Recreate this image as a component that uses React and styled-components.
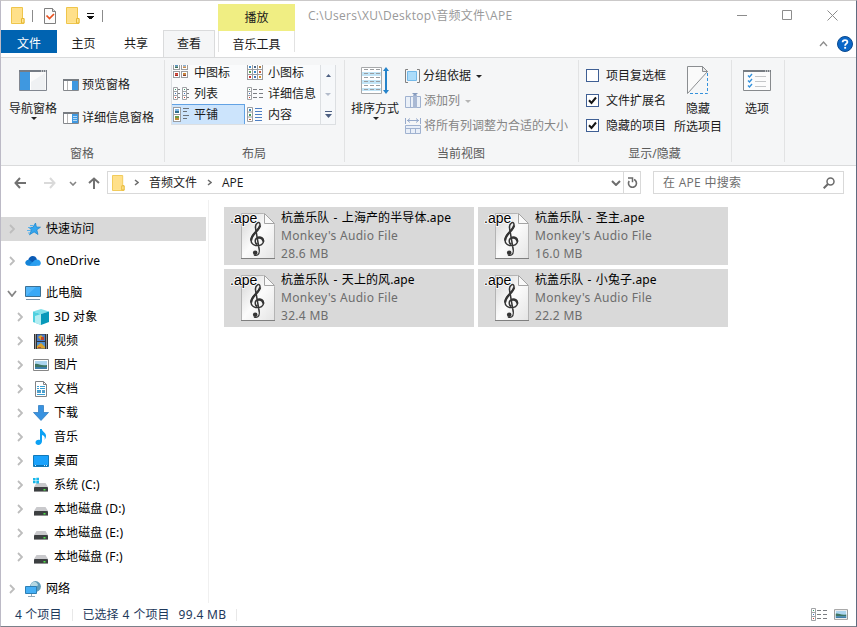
import React from 'react'
import styled, { createGlobalStyle, css } from 'styled-components'

const GlobalStyle = createGlobalStyle`
  * {
    box-sizing: border-box;
  }
  body {
    margin: 0;
    font-family: 'Noto Sans', 'Noto Sans CJK SC', sans-serif;
    font-size: 12px;
    color: #1b1b1b;
  }
  svg {
    display: block;
    flex: none;
  }
`

const Window = styled.div`
  display: flex;
  flex-direction: column;
  width: 857px;
  height: 627px;
  overflow: hidden;
  background: #fff;
  border: 1px solid;
  border-color: #cbc9c9 #5f6b80 #7b808a #bcbac6;
`

const Text = styled.span`
  white-space: nowrap;
  line-height: ${(p) => p.$line || 18}px;
  letter-spacing: ${(p) => p.$track || 0}px;
  word-spacing: ${(p) => p.$word || 0}px;
  color: ${(p) => p.$color || 'inherit'};
`

/* ---------- title bar and tabs ---------- */

const Header = styled.header`
  display: flex;
  height: 56px;
  flex: none;
  justify-content: space-between;
`
const HeaderLeft = styled.div`
  display: flex;
  flex-direction: column;
  width: 217px;
`
const QuickBar = styled.div`
  display: flex;
  align-items: center;
  height: 30px;
  padding-left: 10px;
`
const QuickItem = styled.div`
  margin-left: ${(p) => p.$gap || 0}px;
`
const BarLine = styled.div`
  width: 1px;
  height: 12px;
  margin-left: ${(p) => p.$gap}px;
  background: #8b8b8b;
`
const Tabs = styled.nav`
  display: flex;
  height: 27px;
`
const Tab = styled.div`
  display: flex;
  justify-content: center;
  width: ${(p) => p.$width}px;
  height: 26px;
  line-height: 28px;
  ${(p) =>
    p.$kind === 'file' &&
    css`
      height: 23px;
      background: #0063b1;
      color: #fff;
    `}
  ${(p) =>
    p.$kind === 'active' &&
    css`
      height: 27px;
      margin-left: 1px;
      background: #f5f6f7;
      border: 1px solid #dadbdc;
      border-bottom: 0;
      line-height: 26px;
      z-index: 1;
    `}
`
const ContextTab = styled.div`
  width: 77px;
  padding-top: 3px;
  text-align: center;
`
const ContextTitle = styled.div`
  height: 27px;
  line-height: 28px;
  background: #f0ee83;
`
const ContextName = styled.div`
  height: 21px;
  line-height: 28px;
  border: solid #e2e2e2;
  border-width: 0 1px;
`
const TitlePath = styled.div`
  flex: 1;
  height: 30px;
  padding-left: 13px;
  line-height: 30px;
  font-family: 'Open Sans', 'Noto Sans CJK SC', sans-serif;
  color: #999;
  letter-spacing: 0.3px;
`
const WindowControls = styled.div`
  display: flex;
  flex-direction: column;
  width: 126px;
`
const ControlRow = styled.div`
  display: flex;
  align-items: center;
  height: 28px;
  padding-left: 7px;
  gap: 35px;
`
const HelpRow = styled.div`
  display: flex;
  align-items: center;
  justify-content: flex-end;
  height: 28px;
  padding: 2px 3px 0 0;
  gap: 9px;
`

/* ---------- ribbon ---------- */

const Ribbon = styled.section`
  display: flex;
  flex: none;
  height: 109px;
  padding: 2px 0 3px;
  background: #f5f6f7;
  border-top: 1px solid #dadbdc;
  border-bottom: 1px solid #dadbdc;
`
const Group = styled.div`
  display: flex;
  flex-direction: column;
  width: ${(p) => p.$width}px;
  border-right: 1px solid #e2e3e4;
`
const GroupBody = styled.div`
  display: flex;
  flex: none;
  height: 84px;
  padding: ${(p) => p.$pad};
`
const GroupName = styled.div`
  flex: none;
  height: 18px;
  padding-right: 1px;
  line-height: 20px;
  text-align: center;
  color: #5a5a5a;
`
const BigButton = styled.div`
  display: flex;
  flex-direction: column;
  align-items: center;
  width: ${(p) => p.$width || 48}px;
`
const BigIcon = styled.div`
  display: flex;
  align-items: center;
  height: 40px;
`
const SmallStack = styled.div`
  display: flex;
  flex-direction: column;
  padding-top: ${(p) => p.$top || 0}px;
  margin-left: ${(p) => p.$left || 0}px;
  gap: ${(p) => p.$gap}px;
`
const SmallButton = styled.div`
  display: flex;
  align-items: center;
  height: 18px;
  gap: ${(p) => p.$gap || 3}px;
  color: ${(p) => (p.$disabled ? '#858585' : 'inherit')};
`
const Arrow = styled.i`
  width: 0;
  height: 0;
  margin: ${(p) => p.$margin || 0};
  border: solid transparent;
  border-width: 3px 3px 0;
  border-top-color: ${(p) => p.$color || '#222'};
`
const Gallery = styled.div`
  display: flex;
  width: 165px;
  height: 60px;
  overflow: hidden;
  background: #fafbfc;
  border: 1px solid #dcdfe2;
  border-top: 0;
`
const GalleryGrid = styled.div`
  display: grid;
  grid-template-columns: 74px 74px;
  grid-auto-rows: 21px;
  margin: -3px 0 0 -1px;
`
const GalleryItem = styled.div`
  display: flex;
  align-items: center;
  padding-left: 1px;
  gap: 5px;
  border: 1px solid ${(p) => (p.$active ? '#62a2e4' : 'transparent')};
  background: ${(p) => (p.$active ? '#cce4fc' : 'transparent')};
`
const GalleryScroll = styled.div`
  display: grid;
  grid-template-rows: 20px 19px 20px;
  width: 15px;
  margin-left: 1px;
  border-left: 1px solid #dcdfe2;
  background: #f6f8fa;
  place-items: center;
`
const Check = styled.div`
  display: flex;
  align-items: center;
  justify-content: center;
  width: 13px;
  height: 13px;
  margin-top: -1px;
  background: #fff;
  border: 1px solid #3f5f94;
`

/* ---------- address bar ---------- */

const AddressRow = styled.div`
  display: flex;
  flex: none;
  align-items: flex-start;
  height: 34px;
  padding-top: 5px;
`
const NavButtons = styled.div`
  display: flex;
  align-items: center;
  width: 106px;
  height: 24px;
  padding-left: 13px;
`
const AddressBox = styled.div`
  display: flex;
  align-items: center;
  width: 534px;
  height: 23px;
  padding-left: 4px;
  border: 1px solid #d9d9d9;
  font-family: 'Open Sans', 'Noto Sans CJK SC', sans-serif;
`
const Crumb = styled.span`
  margin: 0 ${(p) => p.$right || 0}px 0 10px;
  line-height: 20px;
`
const AddressEnd = styled.div`
  display: flex;
  align-items: center;
  margin-left: auto;
  height: 21px;
  gap: 2px;
`
const Refresh = styled.div`
  display: flex;
  align-items: center;
  justify-content: center;
  width: 17px;
  height: 21px;
  border-left: 1px solid #d9d9d9;
`
const SearchBox = styled.div`
  display: flex;
  align-items: center;
  justify-content: space-between;
  width: 191px;
  height: 23px;
  margin-left: 12px;
  padding: 0 8px 0 9px;
  border: 1px solid #d9d9d9;
  font-family: 'Open Sans', 'Noto Sans CJK SC', sans-serif;
  color: #6d6d6d;
`

/* ---------- main area ---------- */

const Main = styled.main`
  display: flex;
  flex: none;
  height: 403px;
`
const Sidebar = styled.aside`
  display: flex;
  flex-direction: column;
  width: 208px;
  padding: 17px 2px 0 0;
  border-right: 1px solid #f0f0f0;
  color: #000;
`
const TreeRow = styled.div`
  display: flex;
  flex: none;
  align-items: center;
  height: 24px;
  padding-left: ${(p) => (p.$child ? 15 : 7)}px;
  margin-bottom: ${(p) => p.$space || 0}px;
  background: ${(p) => (p.$selected ? '#d9d9d9' : 'transparent')};
`
const Expander = styled.div`
  display: flex;
  justify-content: center;
  width: 8px;
`
const TreeIcon = styled.div`
  width: 16px;
  margin: 0 5px 0 9px;
`
const Files = styled.div`
  display: grid;
  align-content: start;
  grid-template-columns: 250px 250px;
  grid-auto-rows: 58px;
  gap: 4px;
  padding: 7px 0 0 15px;
`
const Tile = styled.div`
  display: flex;
  padding: 2px 0 0 6px;
  background: #d9d9d9;
`
const TileText = styled.div`
  display: flex;
  flex-direction: column;
  margin-left: 5px;
`
const StatusBar = styled.footer`
  display: flex;
  align-items: center;
  height: 22px;
  padding: 2px 8px 0 14px;
  color: #1e395b;
`
const StatusLine = styled.div`
  width: 1px;
  height: 12px;
  margin: 0 ${(p) => p.$right}px 0 ${(p) => p.$left}px;
  background: #e8e8e8;
`
const StatusViews = styled.div`
  display: flex;
  align-items: center;
  height: 18px;
  margin: -2px 0 0 auto;
  gap: 7px;
`

/* ---------- icons ---------- */

const Folder = ({ w = 14, h = 17 }) => (
  <svg width={w} height={h} viewBox='0 0 14 17'>
    <path d='M.5.5h11v11h1.500v5H.5z' fill='#ffe696' stroke='#efc54b' />
    <path d='M1 1h10v14H1z' fill='#ffe08a' />
    <path d='M10.500 11.500h2.500v4.500h-2.500z' fill='#ffe696' stroke='#e6b835' />
  </svg>
)

const PropertiesIcon = () => (
  <svg width='12' height='16' viewBox='0 0 12 16'>
    <path d='M.5.5h8l3 3v12H.5z' fill='#fcfcfc' stroke='#7f7f7f' />
    <path d='M8.500.5v3h3' fill='#ddd' stroke='#7f7f7f' />
    <path d='M2.500 7.500l3 3L10 6' fill='none' stroke='#e8501e' strokeWidth='1.700' />
  </svg>
)

const CustomizeIcon = () => (
  <svg width='7' height='6' viewBox='0 0 7 6' shapeRendering='crispEdges'>
    <path d='M0 0h7v1H0zM0 3h7v1H6v1H5v1H2V5H1V4H0z' fill='#111' />
  </svg>
)

const MinimizeIcon = () => (
  <svg width='10' height='10' viewBox='0 0 10 10'>
    <path d='M0 5.500h10' stroke='#8c8c8c' />
  </svg>
)
const MaximizeIcon = () => (
  <svg width='10' height='10' viewBox='0 0 10 10'>
    <path d='M.5.5h9v9h-9z' fill='none' stroke='#8c8c8c' />
  </svg>
)
const CloseIcon = () => (
  <svg width='11' height='11' viewBox='0 0 11 11'>
    <path d='M.5.5l10 10M10.500.5l-10 10' stroke='#8c8c8c' />
  </svg>
)
const HelpIcon = () => (
  <svg width='16' height='16' viewBox='0 0 16 16'>
    <circle cx='8' cy='8' r='7.500' fill='#0a67c8' stroke='#0b4a8f' />
    <path
      d='M5.600 6.200C5.700 3.400 10.400 3.400 10.400 6c0 1.600-2.300 1.800-2.300 3.700'
      fill='none'
      stroke='#fff'
      strokeWidth='1.800'
    />
    <path d='M7.200 10.900h1.900v1.800H7.200z' fill='#fff' />
  </svg>
)

const Chevron = ({ dir = 'right', color = '#a6a6a6', w = 6, h = 10, bold = 1.3 }) => {
  const paths = {
    right: `M1 1l${w - 2} ${h / 2 - 1}l${2 - w} ${h / 2 - 1}`,
    down: `M1 1l${w / 2 - 1} ${h - 2}l${w / 2 - 1} ${2 - h}`,
    up: `M1 ${h - 1}l${w / 2 - 1} ${2 - h}l${w / 2 - 1} ${h - 2}`
  }
  return (
    <svg width={w} height={h}>
      <path d={paths[dir]} fill='none' stroke={color} strokeWidth={bold} />
    </svg>
  )
}

const NavPaneIcon = () => (
  <svg width='28' height='21' viewBox='0 0 28 21'>
    <path d='M.5.5h27v20H.5z' fill='#fafafa' stroke='#828790' />
    <path d='M0 0h28v2H0z' fill='#767c85' />
    <path d='M22 .5h1v1h-1zM24 .5h1v1h-1zM26 .5h1v1h-1z' fill='#fff' />
    <path d='M1 2h10v18H1z' fill='#3f98e0' />
    <path d='M11 2h1v18h-1z' fill='#fff' />
    <path d='M12 20V12L26 3v17z' fill='#eff1f3' />
  </svg>
)

const PaneIcon = ({ details }) => (
  <svg width='16' height='12' viewBox='0 0 16 12'>
    <path d='M.5.5h15v11H.5z' fill='#fff' stroke='#85888c' />
    <path d='M0 0h16v2H0z' fill='#777c82' />
    <path d='M4.500 2v9' stroke='#b8b8b8' />
    <path d='M9 2h6v9H9z' fill='#3f98e0' />
    {details && (
      <path d='M10 4.500h4M10 6.500h4M10 8.500h4' stroke='#d4eafa' strokeWidth='.8' />
    )}
  </svg>
)

// framed thumbnail: sky on top, a coloured subject below
const Thumb = ({ x, y, s = 6, fill = '#5b95c4', ground = '#3d6f5a' }) => (
  <g>
    <rect x={x + 0.5} y={y + 0.5} width={s} height={s} fill='#fff' stroke='#9b9da0' />
    <rect x={x + 2} y={y + 2} width={s - 3} height={(s - 3) / 2} fill={fill} />
    <rect x={x + 2} y={y + 2 + (s - 3) / 2} width={s - 3} height={(s - 3) / 2} fill={ground} />
  </g>
)

const MediumIcon = () => (
  <svg width='16' height='19' viewBox='0 0 16 19'>
    <Thumb x={0} y={0} />
    <Thumb x={8} y={0} fill='#8db4d8' ground='#c98b4c' />
    <Thumb x={0} y={8} fill='#cc3a2b' ground='#a92218' />
    <Thumb x={8} y={8} fill='#d28a2b' ground='#8d3f22' />
  </svg>
)

const SmallIcon = () => {
  const colors = ['#3d88c9', '#48688c', '#b1793d', '#5aa050', '#3d88c9', '#c45c3e', '#c33', '#4575b5', '#d6902c']
  return (
    <svg width='16' height='18' viewBox='0 0 16 18'>
      {colors.map((c, i) => (
        <g key={i}>
          <rect
            x={(i % 3) * 5 + 0.5}
            y={Math.floor(i / 3) * 5 + 0.5}
            width='5'
            height='5'
            fill='#fff'
            stroke='#9b9da0'
          />
          <rect x={(i % 3) * 5 + 2} y={Math.floor(i / 3) * 5 + 2} width='2' height='2' fill={c} />
        </g>
      ))}
    </svg>
  )
}

const DetailColumn = ({ x, lines }) => (
  <g transform={`translate(${x} 0)`}>
    <path d='M.5.5h4v12h-4zM.5 4.500h4M.5 8.500h4' fill='#fff' stroke='#a1a3a6' />
    <path d='M2 2h1v1H2z' fill='#3b9a6a' />
    <path d='M2 6h1v1H2z' fill='#3d72c2' />
    <path d='M2 10h1v1H2z' fill='#cc3c2f' />
    <path d={lines} stroke='#7a7d82' />
  </g>
)
const ListIcon = () => (
  <svg width='16' height='13' viewBox='0 0 16 13'>
    <DetailColumn x={0} lines='M5 2.500h2M5 6.500h2M5 10.500h2' />
    <DetailColumn x={9} lines='M5 2.500h2M5 6.500h2M5 10.500h2' />
  </svg>
)
const DetailsIcon = () => (
  <svg width='16' height='13' viewBox='0 0 16 13'>
    <DetailColumn x={0} lines='M6 2.500h4M12 2.500h4M6 6.500h4M12 6.500h4M6 10.500h4M12 10.500h4' />
  </svg>
)
const TilesIcon = () => (
  <svg width='16' height='15' viewBox='0 0 16 15'>
    <Thumb x={0} y={0} s={7} fill='#7fb8e6' ground='#2f6f8c' />
    <Thumb x={0} y={7} s={7} fill='#6d9a45' ground='#c08a35' />
    <path d='M10 1.500h6M10 4.500h4M10 8.500h6M10 11.500h4' stroke='#6c7279' />
  </svg>
)
const ContentIcon = () => (
  <svg width='16' height='15' viewBox='0 0 16 15'>
    <path d='M.5.5h5v14h-5zM.5 5h5M.5 10h5' fill='#fff' stroke='#9b9da0' />
    <path d='M2 2h2v2H2z' fill='#3a86b5' />
    <path d='M2 7h2v2H2z' fill='#44975a' />
    <path d='M2 12h2v1H2z' fill='#b5562c' />
    <path d='M8 1.500h7M8 4.500h7M8 7.500h7M8 10.500h7M8 13.500h7' stroke='#4e7fc4' />
  </svg>
)

const SortIcon = () => (
  <svg width='28' height='27' viewBox='0 0 28 27'>
    <path d='M.5.5h20v26H.5z' fill='#fff' stroke='#a7a9ab' />
    <path d='M1 5h19v4H1zM1 13h19v4H1zM1 21h19v3H1z' fill='#c2e5f7' />
    <path
      d='M3 2.500h16M3 6.500h16M3 10.500h16M3 14.500h16M3 18.500h16M3 22.500h16'
      stroke='#9a9da0'
      strokeDasharray='4 2'
    />
    <path d='M25 3v21' stroke='#2583ca' strokeWidth='2' />
    <path d='M22 4l3-4 3 4zM22 23l3 4 3-4z' fill='#2583ca' />
  </svg>
)
const GroupByIcon = () => (
  <svg width='15' height='14' viewBox='0 0 15 14'>
    <path d='M3 .5H.5v13H3M12 .5h2.500v13H12' fill='none' stroke='#818181' />
    <path d='M2.500 2.500h9v9h-9z' fill='#acdcfa' stroke='#74b9e8' />
  </svg>
)
const AddColumnIcon = () => (
  <svg width='16' height='16' viewBox='0 0 16 16'>
    <path d='M.5 3.500h15v11H.5zM5.500 3v11' fill='#eaf0f8' stroke='#a0b2d0' />
    <path d='M8 2h4v13H8z' fill='#a9b9d4' />
    <path d='M7 0h6l-3 3z' fill='#869bbe' />
  </svg>
)
const FitColumnsIcon = () => (
  <svg width='16' height='16' viewBox='0 0 16 16'>
    <path d='M.5 0v6M15.500 0v6M2 2.500h12M5 .5l-2.500 2L5 4.500M11 .5l2.500 2-2.500 2' fill='none' stroke='#97aacb' />
    <path d='M.5 7.500h15v8H.5zM.5 10.500h15M5.500 10.500v5M10.500 10.500v5' fill='#e9eff8' stroke='#a0b2d0' />
  </svg>
)
const CheckMark = () => (
  <svg width='9' height='9' viewBox='0 0 9 9'>
    <path d='M1 4.200l2.500 2.700L8 1.500' fill='none' stroke='#151515' strokeWidth='2' />
  </svg>
)
const HideIcon = () => (
  <svg width='22' height='28' viewBox='0 0 22 28'>
    <path d='M.5.5h15l5 5L.5 27.500z' fill='#fafafa' />
    <path d='M.5 27.500V.5h15l5 5L.5 27.500' fill='none' stroke='#8b8e91' />
    <path d='M15.500.5v5h5z' fill='#e8e8e8' stroke='#8b8e91' />
    <path d='M20.500 7v20.500H1' fill='none' stroke='#3391dc' strokeDasharray='3 2' />
  </svg>
)
const OptionsIcon = () => (
  <svg width='28' height='21' viewBox='0 0 28 21'>
    <path d='M.5.5h27v20H.5z' fill='#fcfcfc' stroke='#878a8d' />
    <path d='M0 0h28v2H0z' fill='#777c82' />
    <path d='M22 .5h1v1h-1zM24 .5h1v1h-1zM26 .5h1v1h-1z' fill='#fff' />
    <path
      d='M5 5.500l1.500 1.500L9 4M5 10.500L6.500 12 9 9M5 15.500L6.500 17 9 14'
      fill='none'
      stroke='#3391dc'
      strokeWidth='1.400'
    />
    <path d='M12 6.500h11M12 11.500h11M12 16.500h11' stroke='#c4c6c8' />
  </svg>
)

const MoveArrow = ({ d, color, w = 12, h = 12 }) => (
  <svg width={w} height={h} viewBox={`0 0 ${w} ${h}`}>
    <path d={d} fill='none' stroke={color} strokeWidth='2' />
  </svg>
)
const RefreshIcon = () => (
  <svg width='11' height='12' viewBox='0 0 11 12'>
    <path d='M7 2.600A4 4 0 1 1 2.200 4' fill='none' stroke='#6b6b6b' strokeWidth='1.600' />
    <path d='M1 1h4.500v4.300' fill='none' stroke='#6b6b6b' strokeWidth='1.500' />
  </svg>
)
const SearchIcon = () => (
  <svg width='12' height='12' viewBox='0 0 12 12'>
    <circle cx='7.500' cy='4.500' r='3.500' fill='none' stroke='#6b6b6b' strokeWidth='1.500' />
    <path d='M5 7L.7 11.300' stroke='#6b6b6b' strokeWidth='2' />
  </svg>
)

const StarIcon = () => (
  <svg width='16' height='16' viewBox='0 0 16 16'>
    <path
      d='M10.500 2l.9 4 4.100.2-3.700 2.600 1.200 4.700-3.900-2.600-4.600 2.900 2-4.900L4 6.500l4-.2z'
      fill='#35a6ee'
      stroke='#1582cc'
      strokeWidth='.7'
    />
    <path d='M5 4.500h3.500M3 6.500h3M2 9.500h4M3 12h2' stroke='#58b2ec' />
  </svg>
)
const CloudIcon = () => (
  <svg width='16' height='16' viewBox='0 0 16 16'>
    <path d='M3 8.200C3.800 2 10.500 1.500 12 6.500L8 11z' fill='#0a5ab5' />
    <path d='M4 12.800C-1.200 12.800-.8 6.400 4.200 6.700L12 12.800z' fill='#1484d8' />
    <path d='M4 12.800l5.500-5.500c3-2.100 6.800.3 6.300 3.200-.3 1.500-1.300 2.300-2.500 2.300z' fill='#2a9ff0' />
  </svg>
)
const ComputerIcon = () => (
  <svg width='16' height='16' viewBox='0 0 16 16'>
    <path d='M.5 1.500h15v10H.5z' fill='#54b7fa' stroke='#3c7195' />
    <path d='M1 11L11 2h4v9z' fill='#3aa9f6' />
    <path d='M5 12h6v1H5z' fill='#fff' />
    <path d='M1 14.500h14' stroke='#7893aa' />
  </svg>
)
const CubeIcon = () => (
  <svg width='16' height='16' viewBox='0 0 16 16'>
    <path d='M0 2.500L8 0l8 2.500L8 5z' fill='#7fe0ea' />
    <path d='M0 2.500L8 5v11l-8-3z' fill='#4fd0df' />
    <path d='M16 2.500L8 5v11l8-3z' fill='#0899ba' />
    <path d='M2 7l6-2v11l-6-2.300z' fill='#b4edf2' />
  </svg>
)
const VideoIcon = () => (
  <svg width='16' height='16' viewBox='0 0 16 16'>
    <path d='M1 1h14v15H1z' fill='#333' />
    <path d='M4 1.500h8V8H4z' fill='#4679c7' />
    <path d='M4 9h8v6.500H4z' fill='#4f90d2' />
    <path d='M5 4l3-2 3 3-3 2zM4 13l4-3 4 4v1.500H4z' fill='#dba42a' />
    <path d='M8 4h3v3H8zM5 14h3v1H5z' fill='#bd442d' />
    <path d='M2.500 1.500V16M13.500 1.500V16' stroke='#f1f1f1' strokeDasharray='1 1' />
  </svg>
)
const PictureIcon = ({ w = 16, h = 12 }) => (
  <svg width={w} height={h} viewBox='0 0 16 12'>
    <path d='M.5.5h15v11H.5z' fill='#fff' stroke='#878787' />
    <path d='M2 2h12v8H2z' fill='#acd5ef' />
    <path d='M2 5c3-1 5 2 12 1v2H2z' fill='#3e7562' />
    <path d='M2 8h12v2H2z' fill='#3f7fa9' />
  </svg>
)
const DocumentIcon = () => (
  <svg width='16' height='16' viewBox='0 0 16 16'>
    <path d='M2.500.5h8l3 3v12h-11z' fill='#fff' stroke='#808386' />
    <path d='M10.500.5v3h3' fill='none' stroke='#808386' />
    <path d='M4 5.500h2M7 5.500h5M4 7.500h2M7 7.500h5M4 9.500h4M9 11.500h3M4 13.500h8' stroke='#379fd5' />
    <path d='M4 10h4v2H4zM9 9h3v2H9z' fill='#5a9ec5' />
  </svg>
)
const DownloadIcon = () => (
  <svg width='16' height='16' viewBox='0 0 16 16'>
    <path d='M5.500.5h5v7h5L8 15.500.5 7.500h5z' fill='#3892e0' stroke='#2476bd' strokeWidth='.7' />
  </svg>
)
const MusicIcon = () => (
  <svg width='16' height='16' viewBox='0 0 16 16'>
    <path
      d='M7 0h1.800c.3 2.800 4.600 3.500 4.200 7.300-.1 1.500-.7 2.600-1.500 3.600.8-2.300.3-4.100-2.500-5v6.400C9 16.800 2.500 17 2.500 13.500c0-2.300 2.500-3.300 4.500-2.500z'
      fill='#0ca1f4'
    />
  </svg>
)
const DesktopIcon = () => (
  <svg width='16' height='12' viewBox='0 0 16 12'>
    <path d='M.5.5h15v11H.5z' fill='#1aa2fc' stroke='#1179b9' />
    <path d='M1 10.500h14' stroke='#0c71b1' />
    <path d='M2 10h1v1H2zM11 10h1v1h-1zM13 10h1v1h-1z' fill='#d1efff' />
  </svg>
)
const DriveIcon = ({ system }) => (
  <svg width='16' height='16' viewBox='0 0 16 16'>
    <path d='M3.500 6h9L15 10v4.500H1V10z' fill='#c9c9cc' />
    <path d='M1.500 10h13l.5.5v4H1v-4z' fill='#3c3f41' />
    <path d='M10.500 12h2v1.500h-2z' fill='#4ee847' />
    {system && <path d='M0 1h2.600v2.400H0zM3.300.7H6v2.700H3.300zM0 4h2.600v2.300H0zM3.300 4H6v2.600H3.300z' fill='#18b7ea' />}
  </svg>
)
const NetworkIcon = () => (
  <svg width='16' height='16' viewBox='0 0 16 16'>
    <circle cx='10.500' cy='5.500' r='5.400' fill='#5f9bb8' />
    <path d='M6 3c3-4 6-2 7 1-2 3-4 0-7 2z' fill='#b6d8e2' />
    <path d='M.5 5.500h11v7H.5z' fill='#45aff5' stroke='#2e7fb4' />
    <path d='M3 15.500h7M6.500 13v2' stroke='#91a8b7' />
  </svg>
)

const ApeIcon = () => (
  <svg width='46' height='54' viewBox='0 0 46 54'>
    <defs>
      <linearGradient id='paper' x1='0' y1='0' x2='1' y2='1'>
        <stop offset='0' stopColor='#d4d4d4' />
        <stop offset='.5' stopColor='#fbfbfb' />
        <stop offset='1' stopColor='#e4e4e4' />
      </linearGradient>
    </defs>
    <path d='M11.500 4.500h22l11 11v34h-33z' fill='url(#paper)' stroke='#b4b4b4' />
    <path d='M11 49.500h34' stroke='#7f7f7f' />
    <path d='M34.500 4.500v10h10z' fill='#f9f9f9' stroke='#a4a4a4' />
    <path
      d='M25.500 19L29.300 41M25.500 19C25 14 29.800 11.500 30 15.500C30.500 21.500 21 24.500 21 31C21 38.500 33.500 38 33.500 32.300C33.500 27 25.200 26.800 25.200 32C25.200 33.800 26 34.800 27.200 35.200'
      fill='none'
      stroke='#343434'
      strokeWidth='1.500'
    />
    <path
      d='M30 16.500C29.500 21.500 21 25 21.200 31.500M28 28.800C31.500 28.200 33.300 30.300 33.200 32.500'
      fill='none'
      stroke='#343434'
      strokeWidth='2.300'
    />
    <path d='M29.300 41c.5 4.800-2.800 6.400-5.300 4.900' fill='none' stroke='#343434' strokeWidth='1.200' />
    <circle cx='25.200' cy='43.800' r='2.300' fill='#343434' />
    <text
      x='0'
      y='14'
      fontFamily='Liberation Sans, sans-serif'
      fontSize='14'
      fill='#000'
      stroke='#fff'
      strokeWidth='1.500'
      paintOrder='stroke'
    >
      .ape
    </text>
  </svg>
)

/* ---------- data ---------- */

const VIEWS = [
  { name: '中图标', icon: <MediumIcon /> },
  { name: '小图标', icon: <SmallIcon /> },
  { name: '列表', icon: <ListIcon /> },
  { name: '详细信息', icon: <DetailsIcon /> },
  { name: '平铺', icon: <TilesIcon />, active: true },
  { name: '内容', icon: <ContentIcon /> }
]

const CHECKS = [
  { name: '项目复选框', checked: false },
  { name: '文件扩展名', checked: true },
  { name: '隐藏的项目', checked: true }
]

const TREE = [
  { name: '快速访问', icon: <StarIcon />, selected: true, space: 8 },
  { name: 'OneDrive', icon: <CloudIcon />, space: 8 },
  { name: '此电脑', icon: <ComputerIcon />, open: true },
  { name: '3D 对象', icon: <CubeIcon />, child: true },
  { name: '视频', icon: <VideoIcon />, child: true },
  { name: '图片', icon: <PictureIcon />, child: true },
  { name: '文档', icon: <DocumentIcon />, child: true },
  { name: '下载', icon: <DownloadIcon />, child: true },
  { name: '音乐', icon: <MusicIcon />, child: true },
  { name: '桌面', icon: <DesktopIcon />, child: true },
  { name: '系统 (C:)', icon: <DriveIcon system />, child: true },
  { name: '本地磁盘 (D:)', icon: <DriveIcon />, child: true },
  { name: '本地磁盘 (E:)', icon: <DriveIcon />, child: true },
  { name: '本地磁盘 (F:)', icon: <DriveIcon />, child: true, space: 8 },
  { name: '网络', icon: <NetworkIcon /> }
]

const FILES = [
  { name: '杭盖乐队 - 上海产的半导体.ape', size: '28.6 MB' },
  { name: '杭盖乐队 - 圣主.ape', size: '16.0 MB' },
  { name: '杭盖乐队 - 天上的风.ape', size: '32.4 MB' },
  { name: '杭盖乐队 - 小兔子.ape', size: '22.2 MB' }
]

/* ---------- sections ---------- */

const TitleArea = () => (
  <Header>
    <HeaderLeft>
      <QuickBar>
        <QuickItem>
          <Folder />
        </QuickItem>
        <BarLine $gap={7} />
        <QuickItem $gap={11}>
          <PropertiesIcon />
        </QuickItem>
        <QuickItem $gap={10}>
          <Folder />
        </QuickItem>
        <QuickItem $gap={7}>
          <CustomizeIcon />
        </QuickItem>
        <BarLine $gap={8} />
      </QuickBar>
      <Tabs>
        <Tab $width={56} $kind='file'>
          文件
        </Tab>
        <Tab $width={53}>主页</Tab>
        <Tab $width={52}>共享</Tab>
        <Tab $width={52} $kind='active'>
          查看
        </Tab>
      </Tabs>
    </HeaderLeft>
    <ContextTab>
      <ContextTitle>播放</ContextTitle>
      <ContextName>音乐工具</ContextName>
    </ContextTab>
    <TitlePath>C:\Users\XU\Desktop\音频文件\APE</TitlePath>
    <WindowControls>
      <ControlRow>
        <MinimizeIcon />
        <MaximizeIcon />
        <CloseIcon />
      </ControlRow>
      <HelpRow>
        <Chevron dir='up' w={9} h={6} color='#8c8c8c' />
        <HelpIcon />
      </HelpRow>
    </WindowControls>
  </Header>
)

const RibbonArea = () => (
  <Ribbon>
    <Group $width={164}>
      <GroupBody $pad='0 0 0 8px'>
        <BigButton>
          <BigIcon>
            <NavPaneIcon />
          </BigIcon>
          <Text>导航窗格</Text>
          <Arrow $margin='-1px 0 0 2px' />
        </BigButton>
        <SmallStack $left={6} $top={16} $gap={15}>
          <SmallButton>
            <PaneIcon />
            <Text>预览窗格</Text>
          </SmallButton>
          <SmallButton>
            <PaneIcon details />
            <Text>详细信息窗格</Text>
          </SmallButton>
        </SmallStack>
      </GroupBody>
      <GroupName>窗格</GroupName>
    </Group>
    <Group $width={180}>
      <GroupBody $pad='5px 0 0 6px'>
        <Gallery>
          <GalleryGrid>
            {VIEWS.map((v) => (
              <GalleryItem key={v.name} $active={v.active}>
                {v.icon}
                <Text>{v.name}</Text>
              </GalleryItem>
            ))}
          </GalleryGrid>
          <GalleryScroll>
            <svg width='5' height='3'>
              <path d='M0 3l2.500-3L5 3z' fill='#4d6082' />
            </svg>
            <Arrow $color='#b3bccb' />
            <svg width='7' height='7'>
              <path d='M0 .5h7' stroke='#4d6082' />
              <path d='M0 3h7L3.500 7z' fill='#4d6082' />
            </svg>
          </GalleryScroll>
        </Gallery>
      </GroupBody>
      <GroupName>布局</GroupName>
    </Group>
    <Group $width={234}>
      <GroupBody $pad='0 0 0 6px'>
        <BigButton>
          <BigIcon>
            <SortIcon />
          </BigIcon>
          <Text>排序方式</Text>
          <Arrow $margin='-1px 0 0 2px' />
        </BigButton>
        <SmallStack $left={6} $top={7} $gap={7}>
          <SmallButton>
            <GroupByIcon />
            <Text>分组依据</Text>
            <Arrow $margin='0 0 0 2px' />
          </SmallButton>
          <SmallButton $disabled>
            <AddColumnIcon />
            <Text>添加列</Text>
            <Arrow $margin='0 0 0 2px' $color='#b5b5b5' />
          </SmallButton>
          <SmallButton $disabled>
            <FitColumnsIcon />
            <Text>将所有列调整为合适的大小</Text>
          </SmallButton>
        </SmallStack>
      </GroupBody>
      <GroupName>当前视图</GroupName>
    </Group>
    <Group $width={153}>
      <GroupBody $pad='0 0 0 7px'>
        <SmallStack $top={7} $gap={7}>
          {CHECKS.map((c) => (
            <SmallButton key={c.name} $gap={7}>
              <Check>{c.checked && <CheckMark />}</Check>
              <Text>{c.name}</Text>
            </SmallButton>
          ))}
        </SmallStack>
        <BigButton $width={64}>
          <BigIcon>
            <HideIcon />
          </BigIcon>
          <Text>隐藏</Text>
          <Text $line={17}>所选项目</Text>
        </BigButton>
      </GroupBody>
      <GroupName>显示/隐藏</GroupName>
    </Group>
    <Group $width={53}>
      <GroupBody $pad='0 0 0 1px'>
        <BigButton>
          <BigIcon>
            <OptionsIcon />
          </BigIcon>
          <Text>选项</Text>
        </BigButton>
      </GroupBody>
    </Group>
  </Ribbon>
)

const AddressArea = () => (
  <AddressRow>
    <NavButtons>
      <MoveArrow d='M6 1L1.500 6 6 11M1.500 6H12' color='#717171' />
      <QuickItem $gap={18}>
        <MoveArrow d='M6 1l4.500 5L6 11M10.500 6H0' color='#dadada' />
      </QuickItem>
      <QuickItem $gap={13}>
        <Chevron dir='down' w={8} h={5} color='#858585' bold={1.6} />
      </QuickItem>
      <QuickItem $gap={11}>
        <MoveArrow d='M1 6l5-4.500L11 6M6 1.500V12' color='#717171' />
      </QuickItem>
    </NavButtons>
    <AddressBox>
      <Folder w={13} h={16} />
      <QuickItem $gap={9}>
        <Chevron w={5} h={7} color='#6d6d6d' bold={1.5} />
      </QuickItem>
      <Crumb $right={10}>音频文件</Crumb>
      <Chevron w={5} h={7} color='#6d6d6d' bold={1.5} />
      <Crumb>APE</Crumb>
      <AddressEnd>
        <Chevron dir='down' w={10} h={6} color='#6d6d6d' bold={2} />
        <Refresh>
          <RefreshIcon />
        </Refresh>
      </AddressEnd>
    </AddressBox>
    <SearchBox>
      <Text $track={0.3}>在 APE 中搜索</Text>
      <SearchIcon />
    </SearchBox>
  </AddressRow>
)

const App = () => {
  return (
    <>
      <GlobalStyle />
      <Window>
        <TitleArea />
        <RibbonArea />
        <AddressArea />
        <Main>
          <Sidebar>
            {TREE.map((t) => (
              <TreeRow key={t.name} $child={t.child} $selected={t.selected} $space={t.space}>
                <Expander>
                  {t.open ? (
                    <Chevron dir='down' w={10} h={7} color='#858585' bold={1.8} />
                  ) : (
                    <Chevron w={6} h={10} color='#bdbdbd' bold={1.8} />
                  )}
                </Expander>
                <TreeIcon>{t.icon}</TreeIcon>
                <Text $track={0.1}>{t.name}</Text>
              </TreeRow>
            ))}
          </Sidebar>
          <Files>
            {FILES.map((f) => (
              <Tile key={f.name}>
                <ApeIcon />
                <TileText>
                  <Text $color='#000' $track={0.1} $word={1}>
                    {f.name}
                  </Text>
                  <Text $color='#6d6d6d' $track={0.3}>
                    Monkey's Audio File
                  </Text>
                  <Text $color='#6d6d6d' $track={0.3}>
                    {f.size}
                  </Text>
                </TileText>
              </Tile>
            ))}
          </Files>
        </Main>
        <StatusBar>
          <Text $track={0.1}>4 个项目</Text>
          <StatusLine $left={11} $right={9} />
          <Text $word={1}>已选择 4 个项目</Text>
          <QuickItem $gap={9}>
            <Text $track={0.3}>99.4 MB</Text>
          </QuickItem>
          <StatusLine $left={10} $right={0} />
          <StatusViews>
            <DetailsIcon />
            <PictureIcon w={14} h={11} />
          </StatusViews>
        </StatusBar>
      </Window>
    </>
  )
}

export default App
